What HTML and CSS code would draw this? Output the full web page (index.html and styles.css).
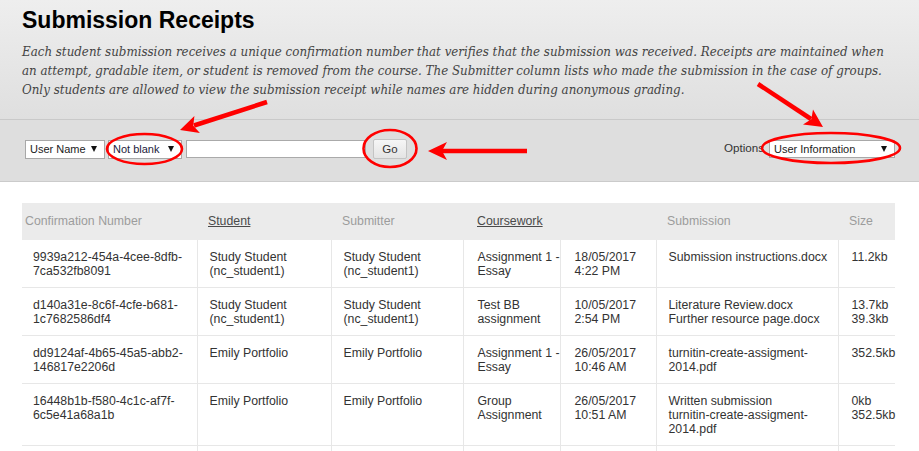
FILE: index.html
```html
<!DOCTYPE html>
<html lang="en">
<head>
<meta charset="utf-8">
<title>Submission Receipts</title>
<link rel="stylesheet" href="styles.css">
</head>
<body>
<div class="page">
  <header class="page-header">
    <h1 class="title">Submission Receipts</h1>
    <p class="desc">Each student submission receives a unique confirmation number that verifies that the submission was received. Receipts are maintained when<br>an attempt, gradable item, or student is removed from the course. The Submitter column lists who made the submission in the case of groups.<br>Only students are allowed to view the submission receipt while names are hidden during anonymous grading.</p>
  </header>

  <div class="filter-bar">
    <div class="filter-left">
      <span class="select sel-user">User Name<i class="caret"></i></span>
      <span class="select sel-blank">Not blank<i class="caret"></i></span>
      <span class="text-input"></span>
      <span class="go-btn">Go</span>
    </div>
    <div class="filter-right">
      <span class="opt-label">Options</span>
      <span class="select sel-options">User Information<i class="caret"></i></span>
    </div>
  </div>

  <table class="receipts">
    <colgroup>
      <col class="c-conf"><col class="c-student"><col class="c-submitter"><col class="c-course"><col class="c-date"><col class="c-file"><col class="c-size">
    </colgroup>
    <thead>
      <tr>
        <th class="h-conf">Confirmation Number</th>
        <th><span class="sortable">Student</span></th>
        <th>Submitter</th>
        <th colspan="2" class="h-course"><span class="sortable">Coursework</span></th>
        <th>Submission</th>
        <th>Size</th>
      </tr>
    </thead>
    <tbody>
      <tr class="row">
        <td class="d-conf">9939a212-454a-4cee-8dfb-<br>7ca532fb8091</td>
        <td>Study Student<br>(nc_student1)</td>
        <td>Study Student<br>(nc_student1)</td>
        <td class="d-course">Assignment 1 -<br>Essay</td>
        <td class="d-date">18/05/2017<br>4:22 PM</td>
        <td>Submission instructions.docx</td>
        <td class="d-size">11.2kb</td>
      </tr>
      <tr class="row">
        <td class="d-conf">d140a31e-8c6f-4cfe-b681-<br>1c7682586df4</td>
        <td>Study Student<br>(nc_student1)</td>
        <td>Study Student<br>(nc_student1)</td>
        <td class="d-course">Test BB<br>assignment</td>
        <td class="d-date">10/05/2017<br>2:54 PM</td>
        <td>Literature Review.docx<br>Further resource page.docx</td>
        <td class="d-size">13.7kb<br>39.3kb</td>
      </tr>
      <tr class="row">
        <td class="d-conf">dd9124af-4b65-45a5-abb2-<br>146817e2206d</td>
        <td>Emily Portfolio</td>
        <td>Emily Portfolio</td>
        <td class="d-course">Assignment 1 -<br>Essay</td>
        <td class="d-date">26/05/2017<br>10:46 AM</td>
        <td>turnitin-create-assigment-<br>2014.pdf</td>
        <td class="d-size">352.5kb</td>
      </tr>
      <tr class="row">
        <td class="d-conf">16448b1b-f580-4c1c-af7f-<br>6c5e41a68a1b</td>
        <td>Emily Portfolio</td>
        <td>Emily Portfolio</td>
        <td class="d-course">Group<br>Assignment</td>
        <td class="d-date">26/05/2017<br>10:51 AM</td>
        <td>Written submission<br>turnitin-create-assigment-<br>2014.pdf</td>
        <td class="d-size">0kb<br>352.5kb</td>
      </tr>
      <tr class="row">
        <td class="d-conf">&nbsp;</td>
        <td>&nbsp;</td>
        <td>&nbsp;</td>
        <td class="d-course">&nbsp;</td>
        <td class="d-date">&nbsp;</td>
        <td>&nbsp;</td>
        <td class="d-size">&nbsp;</td>
      </tr>
    </tbody>
  </table>

  <svg class="annotations" width="919" height="451" viewBox="0 0 919 451" xmlns="http://www.w3.org/2000/svg">
    <g fill="none" stroke="#ff0000" stroke-width="2.6">
      <ellipse cx="144.5" cy="149" rx="37.5" ry="15"/>
      <ellipse cx="390" cy="148.5" rx="26.5" ry="18.5"/>
      <ellipse cx="831" cy="148" rx="69" ry="15"/>
    </g>
    <g stroke="#ff0000" stroke-width="4.5" stroke-linecap="butt">
      <line x1="267" y1="102" x2="194" y2="125.5"/>
      <line x1="527" y1="151" x2="441" y2="151"/>
      <line x1="758" y1="84" x2="811" y2="119"/>
    </g>
    <g fill="#ff0000">
      <polygon points="180,130 194.4,115.9 193.3,125.7 199.9,133.1"/>
      <polygon points="428,151 447,142 442,151 447,160"/>
      <polygon points="823,127 803,124.6 811.3,119.3 813,109.6"/>
    </g>
  </svg>
</div>
</body>
</html>
```

FILE: styles.css
```css
html, body {
  margin: 0;
  padding: 0;
  overflow: hidden;
}

body {
  font-family: "Liberation Sans", Arial, sans-serif;
  background: #ffffff;
}

.page {
  position: relative;
  width: 919px;
  height: 451px;
  overflow: hidden;
}

/* ---------- header ---------- */
.page-header {
  height: 120px;
  box-sizing: border-box;
  padding: 7px 22px 0;
  background: linear-gradient(#eeeeee, #dfdfdf);
  border-bottom: 1px solid #c9c9c9;
}

.title {
  margin: 0;
  font-size: 23px;
  line-height: 27px;
  font-weight: bold;
  color: #000;
}

.desc {
  margin: 8px 0 0;
  font-family: "DejaVu Serif", "Liberation Serif", serif;
  font-style: italic;
  font-stretch: condensed;
  font-size: 13.2px;
  line-height: 19px;
  color: #444;
  white-space: nowrap;
}

/* ---------- filter bar ---------- */
.filter-bar {
  height: 62px;
  box-sizing: border-box;
  display: flex;
  align-items: center;
  justify-content: space-between;
  padding: 0 24px 3px 25px;
  background: #dedede;
  border-bottom: 1px solid #cbcbcb;
}

.filter-left,
.filter-right {
  display: flex;
  align-items: center;
}

.select {
  display: flex;
  align-items: center;
  justify-content: space-between;
  box-sizing: border-box;
  height: 19px;
  padding: 0 7px 0 4px;
  background: #fff;
  border: 1px solid #a8a8a8;
  font-size: 11px;
  color: #222;
  white-space: nowrap;
}

.caret {
  display: block;
  width: 0;
  height: 0;
  border-left: 3px solid transparent;
  border-right: 3px solid transparent;
  border-top: 6px solid #111;
}

.sel-user { width: 80px; }
.sel-blank { width: 74px; margin-left: 3px; color: #1c1c3c; }

.text-input {
  display: block;
  width: 180px;
  height: 18px;
  margin-left: 4px;
  box-sizing: border-box;
  background: #fff;
  border: 1px solid #aaaaaa;
}

.go-btn {
  display: flex;
  align-items: center;
  justify-content: center;
  width: 34px;
  height: 20px;
  margin-left: 7px;
  box-sizing: border-box;
  background: linear-gradient(#f6f6f6, #e4e4e4);
  border: 1px solid #c4c4c4;
  border-radius: 2px;
  font-size: 11.5px;
  color: #333;
}

.opt-label {
  font-size: 11.6px;
  color: #333;
  margin-right: 5px;
  margin-top: -4px;
}

.sel-options { width: 126px; height: 18px; }

/* ---------- table ---------- */
.receipts {
  margin: 21px 0 0 22px;
  width: 873px;
  border-collapse: collapse;
  table-layout: fixed;
  font-size: 12.3px;
  line-height: 14px;
  color: #333;
}

.c-conf { width: 175px; }
.c-student { width: 134px; }
.c-submitter { width: 132px; }
.c-course { width: 97px; }
.c-date { width: 96px; }
.c-file { width: 182px; }
.c-size { width: 57px; }

.receipts th {
  background: #ebebeb;
  font-weight: normal;
  text-align: left;
  padding: 11px 2px 12px 11px;
  color: #9c9c9c;
  white-space: nowrap;
}

.receipts th.h-conf { padding-left: 3px; }
.receipts th.h-course { padding-left: 14px; }

.sortable {
  color: #4a4a4a;
  text-decoration: underline;
}

.receipts td {
  padding: 10px 2px 9px 12px;
  vertical-align: top;
  text-align: left;
  border-left: 1px solid #e7e7e7;
  white-space: nowrap;
}

.receipts td.d-conf { border-left: none; padding-left: 11px; }
.receipts td.d-course,
.receipts td.d-date { padding-left: 14px; }
.receipts td.d-size { padding-left: 13px; }

.receipts tr.row { border-bottom: 1px solid #e7e7e7; }

/* ---------- annotation overlay ---------- */
.annotations {
  position: absolute;
  left: 0;
  top: 0;
  pointer-events: none;
}
```
